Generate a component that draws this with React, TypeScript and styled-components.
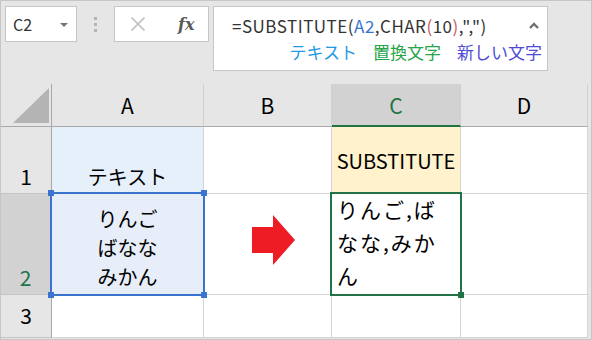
import styled, { createGlobalStyle } from 'styled-components'

const Global = createGlobalStyle`
  html, body { margin: 0; padding: 0; background: #ffffff; }
  body { font-family: "Noto Sans CJK JP", "Noto Sans", sans-serif; }
`

const Frame = styled.div`
  width: 592px;
  height: 340px;
  box-sizing: border-box;
  border: 1px solid #c6c6c6;
  background: #e6e6e6;
  display: flex;
  flex-direction: column;
  overflow: hidden;
`

const Toolbar = styled.div`
  height: 83px;
  flex: none;
  display: flex;
  align-items: flex-start;
  padding: 5px 0 0 4px;
  box-sizing: border-box;
`

const Box = styled.div`
  background: #ffffff;
  border: 1px solid #c6c6c6;
  box-sizing: border-box;
  flex: none;
`

const NameBox = styled(Box)`
  width: 72px;
  height: 36px;
  display: flex;
  align-items: center;
  justify-content: space-between;
  padding: 0 8px 0 7px;
  font-size: 16px;
  color: #303030;
`

const DropTri = styled.span`
  width: 0;
  height: 0;
  border-left: 4px solid transparent;
  border-right: 4px solid transparent;
  border-top: 4px solid #767676;
  margin-top: 1px;
`

const Dots = styled.div`
  width: 3px;
  height: 36px;
  margin: 0 17px 0 17px;
  display: flex;
  flex-direction: column;
  justify-content: center;
  gap: 3px;
`

const Dot = styled.span`
  width: 3px;
  height: 3px;
  background: #b4b4b4;
`

const FxBox = styled(Box)`
  width: 95px;
  height: 36px;
  display: flex;
  align-items: center;
  padding-left: 15px;
  gap: 32px;
`

const FxText = styled.span`
  font-family: "DejaVu Serif", "Liberation Serif", serif;
  font-style: italic;
  font-weight: bold;
  font-size: 16px;
  color: #5a5a5a;
`

const FormulaBox = styled(Box)`
  width: 335px;
  height: 65px;
  margin-left: 4px;
  display: flex;
  flex-direction: column;
  padding: 5px 8px 0 18px;
`

const FormulaLine = styled.div`
  display: flex;
  align-items: center;
  justify-content: space-between;
  height: 27px;
  font-size: 17px;
  letter-spacing: 0.5px;
  color: #333333;
  white-space: nowrap;
`

const Part = styled.span<{ $c?: string }>`
  color: ${(p) => p.$c || '#333333'};
`

const Labels = styled.div`
  display: flex;
  justify-content: flex-end;
  gap: 16px;
  font-size: 17px;
  line-height: 26px;
  margin-right: -3px;
`

const Sheet = styled.div`
  display: grid;
  grid-template-columns: 51px 152px 128px 129px 127px;
  grid-template-rows: 43px 67px 101px 43px;
  background: #ffffff;
  width: 587px;
`

const Corner = styled.div`
  background: #e6e6e6;
  border-right: 1px solid #a8a8a8;
  border-bottom: 1px solid #a8a8a8;
  box-sizing: border-box;
`

const ColHead = styled.div<{ $sel?: boolean }>`
  background: ${(p) => (p.$sel ? '#d2d2d2' : '#e6e6e6')};
  color: ${(p) => (p.$sel ? '#217346' : '#000000')};
  border-right: 1px solid #d0d0d0;
  border-bottom: ${(p) => (p.$sel ? '2px solid #217346' : '1px solid #a8a8a8')};
  box-sizing: border-box;
  display: flex;
  align-items: center;
  justify-content: center;
  font-size: 21px;
  padding-bottom: ${(p) => (p.$sel ? '0' : '1px')};
`

const RowHead = styled.div<{ $sel?: boolean; $v?: string }>`
  background: ${(p) => (p.$sel ? '#d2d2d2' : '#e6e6e6')};
  color: ${(p) => (p.$sel ? '#217346' : '#000000')};
  border-right: ${(p) => (p.$sel ? '2px solid #217346' : '1px solid #a8a8a8')};
  border-bottom: 1px solid #c4c4c4;
  box-sizing: border-box;
  display: flex;
  justify-content: center;
  align-items: ${(p) => p.$v || 'flex-end'};
  font-size: 21px;
  line-height: 28px;
  padding-bottom: 3px;
`

const Cell = styled.div<{ $bg?: string; $v?: string; $h?: string }>`
  position: relative;
  background: ${(p) => p.$bg || '#ffffff'};
  border-right: 1px solid #d4d4d4;
  border-bottom: 1px solid #d4d4d4;
  box-sizing: border-box;
  display: flex;
  flex-direction: column;
  justify-content: ${(p) => p.$v || 'flex-end'};
  align-items: ${(p) => p.$h || 'center'};
  font-size: 20px;
  color: #000000;
  line-height: 29px;
`

const Stacked = styled.div`
  text-align: center;
  padding-bottom: 3px;
`

const Bottom = styled.div`
  padding-bottom: 2px;
`

const Wrapped = styled.div`
  font-size: 21px;
  line-height: 33px;
  letter-spacing: 2px;
  padding: 0 0 0 5px;
  margin-top: -1px;
`

const Frameline = styled.div<{ $c: string }>`
  position: absolute;
  z-index: 2;
  left: -2px;
  top: -2px;
  right: -2px;
  bottom: -2px;
  border: 2px solid ${(p) => p.$c};
  pointer-events: none;
`

const Handle = styled.span<{ $c: string; $x: 'l' | 'r'; $y: 't' | 'b' }>`
  position: absolute;
  z-index: 3;
  width: 6px;
  height: 6px;
  background: ${(p) => p.$c};
  ${(p) => (p.$x === 'l' ? 'left: -4px;' : 'right: -4px;')}
  ${(p) => (p.$y === 't' ? 'top: -4px;' : 'bottom: -4px;')}
`

const ArrowCell = styled(Cell)`
  justify-content: flex-start;
  align-items: flex-start;
  padding: 21px 0 0 48px;
`

const CaretUp = () => (
  <svg width="10" height="7" viewBox="0 0 10 7">
    <polyline points="1,6 5,2 9,6" fill="none" stroke="#707070" strokeWidth="2.4" />
  </svg>
)

const Cross = () => (
  <svg width="16" height="16" viewBox="0 0 16 16">
    <path d="M1.5 1.5 L14.5 14.5 M14.5 1.5 L1.5 14.5" stroke="#bdbdbd" strokeWidth="1.6" />
  </svg>
)

const App = () => (
  <>
    <Global />
    <Frame>
      <Toolbar>
        <NameBox>
          <span>C2</span>
          <DropTri />
        </NameBox>
        <Dots>
          <Dot />
          <Dot />
          <Dot />
        </Dots>
        <FxBox>
          <Cross />
          <FxText>fx</FxText>
        </FxBox>
        <FormulaBox>
          <FormulaLine>
            <span>
              <Part>=SUBSTITUTE(</Part>
              <Part $c="#3a72d0">A2</Part>
              <Part>,CHAR</Part>
              <Part $c="#c85a5a">(</Part>
              <Part>10</Part>
              <Part $c="#c85a5a">)</Part>
              <Part>,",")</Part>
            </span>
            <CaretUp />
          </FormulaLine>
          <Labels>
            <Part $c="#1e9be3">テキスト</Part>
            <Part $c="#25a448">置換文字</Part>
            <Part $c="#4f4bd6">新しい文字</Part>
          </Labels>
        </FormulaBox>
      </Toolbar>
      <Sheet>
        <Corner>
          <svg width="50" height="42" viewBox="0 0 50 42">
            <polygon points="12,39 48,39 48,4" fill="#b4b4b4" />
          </svg>
        </Corner>
        <ColHead>A</ColHead>
        <ColHead>B</ColHead>
        <ColHead $sel>C</ColHead>
        <ColHead>D</ColHead>

        <RowHead>1</RowHead>
        <Cell $bg="#e5f0fb">
          <Bottom>テキスト</Bottom>
        </Cell>
        <Cell />
        <Cell $bg="#fff2cc" $v="center">
          <span>SUBSTITUTE</span>
        </Cell>
        <Cell />

        <RowHead $sel>2</RowHead>
        <Cell $bg="#e7eef9">
          <Stacked>
            りんご
            <br />
            ばなな
            <br />
            みかん
          </Stacked>
          <Frameline $c="#3b74cf" />
          <Handle $c="#3b74cf" $x="l" $y="t" />
          <Handle $c="#3b74cf" $x="r" $y="t" />
          <Handle $c="#3b74cf" $x="l" $y="b" />
          <Handle $c="#3b74cf" $x="r" $y="b" />
        </Cell>
        <ArrowCell>
          <svg width="43" height="50" viewBox="0 0 43 50">
            <polygon points="0,12 21,12 21,0 43,25 21,50 21,38 0,38" fill="#ee1c25" />
          </svg>
        </ArrowCell>
        <Cell $v="flex-start" $h="flex-start">
          <Wrapped>
            りんご,ば
            <br />
            なな,みか
            <br />ん
          </Wrapped>
          <Frameline $c="#217346" />
          <Handle $c="#217346" $x="r" $y="b" />
        </Cell>
        <Cell />

        <RowHead $v="center">3</RowHead>
        <Cell />
        <Cell />
        <Cell />
        <Cell />
      </Sheet>
    </Frame>
  </>
)

export default App
